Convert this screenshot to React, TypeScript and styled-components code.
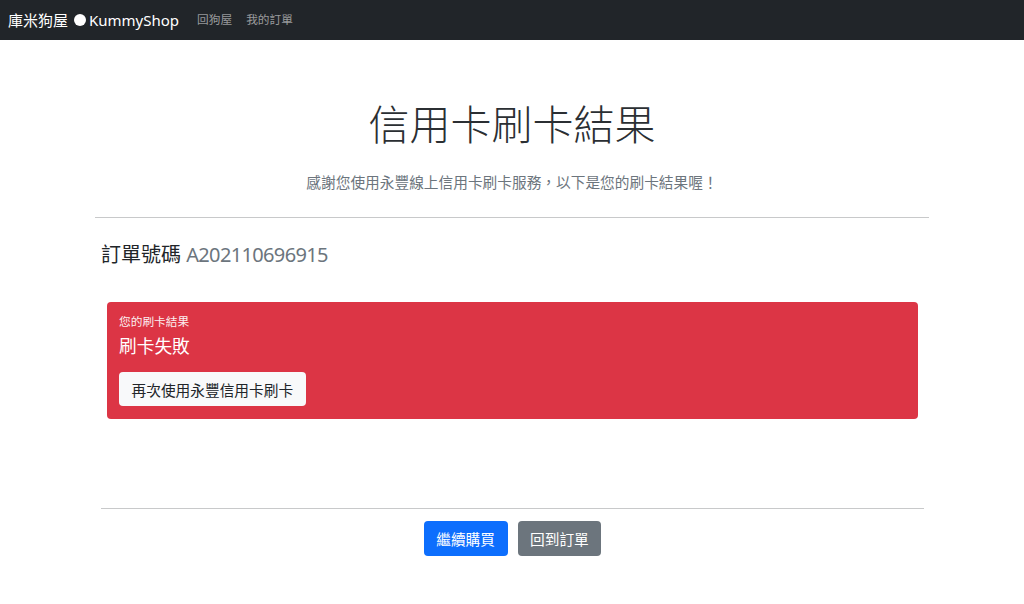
import React from "react";
import styled, { createGlobalStyle } from "styled-components";

const GlobalStyle = createGlobalStyle`
	* {
		box-sizing: border-box;
	}

	body {
		margin: 0;
		background: #fff;
		color: #212529;
		font-family: "Noto Sans", "Noto Sans CJK TC", sans-serif;
		font-size: 14.7px;
		line-height: 1.5;
	}
`;

const App = () => {
	return (
		<Page lang="zh-TW">
			<GlobalStyle />
			<Navbar>
				<Brand>
					庫米狗屋
					<Dot />
					KummyShop
				</Brand>
				<NavLinks>
					<NavLink href="#">回狗屋</NavLink>
					<NavLink href="#">我的訂單</NavLink>
				</NavLinks>
			</Navbar>

			<Main>
				<Header>
					<Title>信用卡刷卡結果</Title>
					<Lead>感謝您使用永豐線上信用卡刷卡服務，以下是您的刷卡結果喔！</Lead>
				</Header>

				<Divider />

				<OrderHeading>
					訂單號碼 <OrderNumber>A202110696915</OrderNumber>
				</OrderHeading>

				<ResultCard>
					<ResultLabel>您的刷卡結果</ResultLabel>
					<ResultStatus>刷卡失敗</ResultStatus>
					<Button variant="light">再次使用永豐信用卡刷卡</Button>
				</ResultCard>

				<Footer>
					<Button variant="primary">繼續購買</Button>
					<Button variant="secondary">回到訂單</Button>
				</Footer>
			</Main>
		</Page>
	);
};

const Page = styled.div`
	min-height: 604px;
`;

const Navbar = styled.nav`
	height: 40px;
	background: #212529;
	display: flex;
	align-items: center;
	padding: 0 8px;
`;

const Brand = styled.a`
	display: flex;
	align-items: center;
	color: #fff;
	font-size: 15px;
	line-height: 1;
	text-decoration: none;
	margin-right: 11px;
`;

const Dot = styled.span`
	display: inline-block;
	width: 12px;
	height: 12px;
	border-radius: 50%;
	background: #fff;
	margin: 0 3px 0 6px;
`;

const NavLinks = styled.div`
	display: flex;
	align-items: center;
`;

const NavLink = styled.a`
	color: rgba(255, 255, 255, 0.55);
	font-size: 11.7px;
	text-decoration: none;
	padding: 0 7px;
`;

const Main = styled.main`
	width: 834px;
	margin: 0 auto;
`;

const Header = styled.header`
	text-align: center;
	padding-top: 60px;
`;

const Title = styled.h1`
	margin: 0 0 22px;
	font-size: 41px;
	font-weight: 300;
	line-height: 1.2;
	color: #2b2f33;
`;

const Lead = styled.p`
	margin: 0;
	color: #6c757d;
	font-family: "Noto Sans CJK TC", sans-serif;
	font-size: 14.7px;
	line-height: 22px;
`;

const Divider = styled.hr`
	margin: 24px 0 0;
	border: 0;
	border-top: 1px solid #c8c9ca;
`;

const OrderHeading = styled.h5`
	margin: 25px 0 0;
	padding-left: 6px;
	font-size: 20px;
	font-weight: 400;
	line-height: 24px;
	color: #212529;
`;

const OrderNumber = styled.span`
	color: #6c757d;
	letter-spacing: -0.65px;
`;

const ResultCard = styled.section`
	margin: 35px 11px 0 12px;
	padding: 10px 12px 13px;
	background: #dc3545;
	border-radius: 4px;
	color: #fff;
	display: flex;
	flex-direction: column;
	align-items: flex-start;
`;

const ResultLabel = styled.div`
	font-size: 11.7px;
	line-height: 18px;
	opacity: 0.92;
`;

const ResultStatus = styled.div`
	margin: 6px 0 15px;
	font-size: 17.7px;
	line-height: 21px;
`;

const buttonColors = {
	primary: { bg: "#0d6efd", fg: "#fff" },
	secondary: { bg: "#6c757d", fg: "#fff" },
	light: { bg: "#f8f9fa", fg: "#212529" },
};

const Button = styled.button<{ variant: keyof typeof buttonColors }>`
	border: 0;
	border-radius: 4px;
	padding: 0 12.5px;
	height: ${({ variant }) => (variant === "light" ? "34px" : "35px")};
	font-family: inherit;
	font-size: 14.7px;
	background: ${({ variant }) => buttonColors[variant].bg};
	color: ${({ variant }) => buttonColors[variant].fg};
	cursor: pointer;
`;

const Footer = styled.footer`
	margin: 89px 5px 0 6px;
	padding-top: 12px;
	border-top: 1px solid #c8c9ca;
	display: flex;
	justify-content: center;
	gap: 10px;
`;

export default App;
